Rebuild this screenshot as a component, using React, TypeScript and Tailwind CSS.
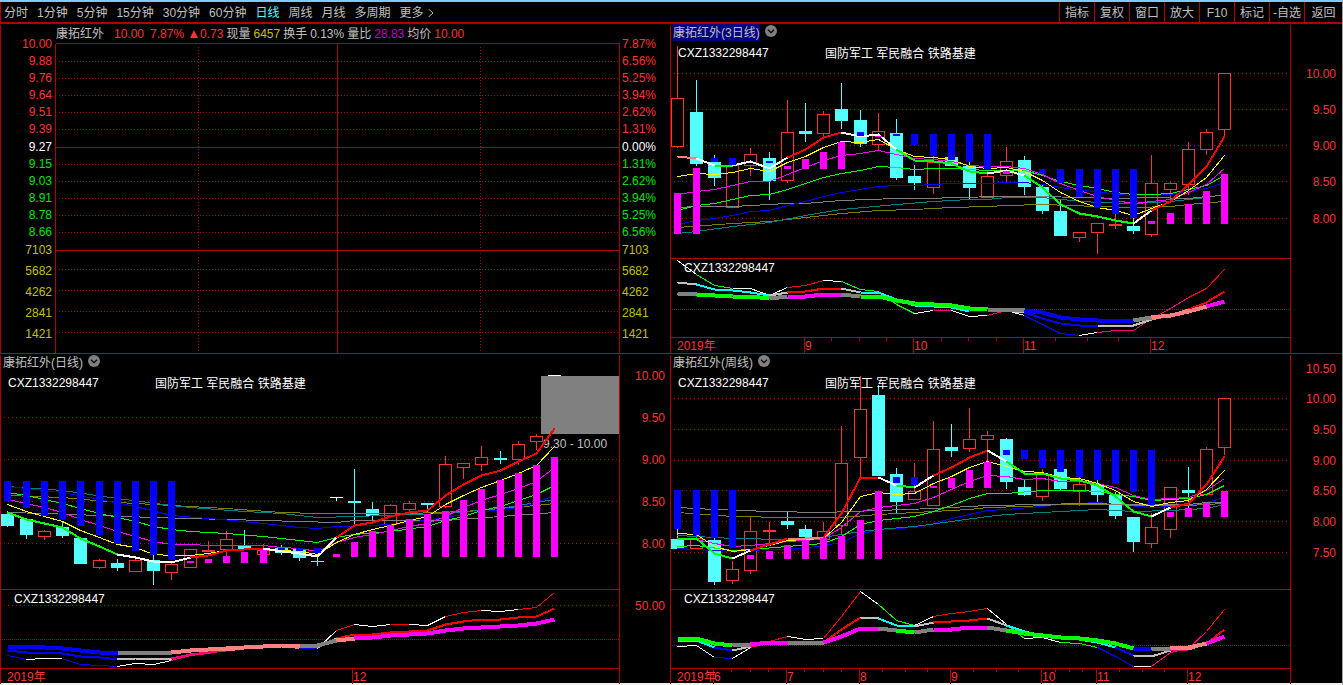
import React from "react";

const GRID = "#b00000";
const UP = "#ff3232";
const DOWN = "#54ffff";

const HUES: Record<string, string> = {
  w: "#ffffff",
  r: "#ff0000",
  g: "#00ff00",
  b: "#0000ff",
  m: "#ff00ff",
  p: "#ff8080",
  d: "#ff0080",
  s: "#c0c0c0",
  a: "#808080",
  c: "#00ffff",
  y: "#ffff00",
  t: "#008080",
  o: "#808000",
};

// Horizontal centre of each trading column, measured from the panel's left frame.
const COLS = [
  7, 26, 44, 62, 80, 99, 117, 135, 153, 171, 190, 208, 226, 244, 263, 281, 299, 317, 336, 354, 372, 390,
  409, 427, 445, 463, 481, 500, 518, 536, 554,
];

type Point = [number, number];

// "12 14 5:20" -> column/value pairs; a bare number belongs to the next column.
function parse(line: string): Point[] {
  let next = 0;
  return line.split(" ").map((part) => {
    const bits = part.split(":");
    const col = bits.length === 2 ? Number(bits[0]) : next;
    next = col + 1;
    return [col, Number(bits[bits.length - 1])];
  });
}

interface Series {
  ys: string;
  hues: string;
  width: number;
}

interface ChartData {
  left: number;
  top: number;
  width: number;
  plotRight: number;
  split: number;
  axis: number;
  candles: string;
  bars: string;
  averages: { hue: string; ys: string }[];
  trend: Series;
  lower: Series[];
  gridLines: number[];
  zero: number;
  scale: [number, string][];
  months: [number, string][];
  minorTicks: boolean;
}

const threeDay: ChartData = {
  left: 670,
  top: 24,
  width: 672,
  plotRight: 1290,
  split: 258,
  axis: 337,
  candles:
    "r46,98,146,148 c80,112,164,166 c155,162,178,186 r165,165,207,207 r148,154,165,176 c152,158,181,200 r100,132,180,183 c103,131,134,142 r111,114,133,136 c83,109,121,129 c110,120,144,147 r113,131,144,150 c119,133,178,180 c165,176,183,190 r156,162,187,194 c157,157,166,166 c162,166,188,199 r170,176,197,197 r147,161,175,183 c156,160,187,195 c184,187,211,214 c199,211,236,236 r232,232,237,242 r223,223,232,254 r214,224,226,229 c217,226,231,234 r155,183,234,237 r182,183,189,200 r142,149,184,195 r129,132,149,155 r73,73,129,137",
  bars:
    "0m193-234 1m168-234 2b158-162 3b158-165 4m165-166 5b161-163 6m166-169 7m159-169 8m152-169 9m142-169 10b132-136 11m136-137 12b134-136 13b134-145 14b134-156 15b134-160 16b134-162 17b134-169 18m171-174 20b169-174 21b169-183 22b169-197 23b169-208 24b169-214 25b169-218 26m221-224 27m213-224 28m204-224 29m191-224 30m174-224",
  averages: [
    { hue: "o", ys: "0:227 3:223 5:221 7:217 9:213 11:210 13:209 15:207 17:206 18:205 20:204 23:206 25:207 27:206 28:204 30:201" },
    { hue: "t", ys: "0:233 1:231 3:226 5:222 7:215 9:209 12:204 14:201 16:199 17:199 18:197 20:197 21:199 23:202 25:203 27:201 29:197 30:194" },
    { hue: "a", ys: "0:207 1:206 3:206 6:203 7:203 9:200 12:198 14:198 15:197 18:196 20:196 22:197 24:198 26:197 28:198 29:196 30:195" },
    { hue: "b", ys: "224 220 218 215 211 210 205 201 196 192 189 186 185 185 184 183 183 183 182 182 184 187 190 191 194 195 194 194 191 188 182" },
    { hue: "g", ys: "210 205 203 199 195 194 189 183 177 173 170 166 167 169 168 168 169 170 170 170 175 181 185 188 192 194 194 193 189 185 175" },
    { hue: "m", ys: "194 191 189 185 181 181 174 167 160 155 153 150 154 158 159 161 165 166 166 168 174 183 190 196 200 203 201 199 192 184 168" },
    { hue: "y", ys: "176 173 174 172 168 171 162 156 147 141 142 139 149 156 157 159 166 168 167 171 180 192 201 207 210 215 208 201 190 177 155" },
  ],
  trend: {
    ys: "156 158 165 165 161 168 157 149 137 132 136 134 149 160 161 163 171 173 170 175 187 204 213 216 220 223 210 201 184 166 136",
    hues: "1p 2w 3g 6w 9r 12w 17g 19w 25g 26w 30r",
    width: 2,
  },
  lower: [
    {
      ys: "260 274 285 288 288 295 287 285 280 281 289 291 304 313 310 310 316 315 310 315 324 333 335 332 330 330 318 308 297 288 269",
      hues: "1w 3g 6w 8r 9w 13g 14w 15d 17w 18d 19w 22b 23w 28d 30r",
      width: 1,
    },
    {
      ys: "282 284 289 290 292 295 292 291 288 288 292 292 299 305 306 307 311 310 310 312 318 323 325 325 325 325 319 315 309 302 291",
      hues: "1s 5c 6s 9r 10s 16c 17b 19s 23b 26s 28p 30r",
      width: 2,
    },
    {
      ys: "293 294 295 296 296 298 296 296 294 294 296 296 300 303 304 305 308 309 309 310 312 317 319 320 320 320 317 315 311 306 301",
      hues: "1a 5g 6a 9m 10a 17g 19a 25b 26a 29p 30m",
      width: 4,
    },
  ],
  gridLines: [73, 109, 145, 181, 218],
  zero: 309,
  scale: [[73, "10.00"], [109, "9.50"], [145, "9.00"], [181, "8.50"], [218, "8.00"]],
  months: [[804, "9"], [913, "10"], [1023, "11"], [1150, "12"]],
  minorTicks: true,
};

const daily: ChartData = {
  left: 0,
  top: 354,
  width: 670,
  plotRight: 619,
  split: 589,
  axis: 668,
  candles:
    "c511,514,526,527 c519,519,535,539 r530,531,536,540 c521,527,536,538 c538,538,564,564 r559,560,567,569 c559,563,568,571 r559,560,571,571 c555,560,571,585 r563,564,572,580 r549,549,567,568 r541,550,552,552 r531,539,549,556 c530,546,549,549 r544,550,554,555 c545,548,553,555 c549,549,558,561 c555,561,562,566 w497,497,498,501 c469,501,503,524 c502,509,516,520 r504,505,524,524 r501,503,509,512 c503,503,505,513 r456,464,506,508 r463,463,467,479 r446,457,464,471 c451,458,460,464 r441,444,459,465 r434,436,441,450 w375,375,376,376",
  bars:
    "0b481-501 1b481-508 2b481-516 3b481-520 4b481-526 5b481-535 6b481-544 7b481-551 8b481-555 9b481-560 10m561-563 11m559-563 12m556-563 13m552-563 14m550-563 15b548-550 16b548-551 17b548-553 18m554-557 19m542-557 20m531-557 21m525-557 22m519-557 23m514-557 24m511-557 25m500-557 26m489-557 27m480-557 28m473-557 29m465-557 30m457-557",
  averages: [
    { hue: "o", ys: "0:495 3:497 6:502 9:505 12:508 15:512 17:513 19:513 22:513 25:511 27:508 29:505 30:503" },
    { hue: "t", ys: "0:486 3:490 6:498 9:505 10:507 13:511 15:513 17:517 19:516 24:513 27:508 30:499" },
    { hue: "a", ys: "0:512 2:513 5:515 8:517 10:518 14:520 18:522 19:520 24:520 27:516 30:512" },
    { hue: "b", ys: "0:486 1:488 3:492 5:499 7:506 9:515 11:518 13:521 15:525 16:527 17:528 18:526 20:525 22:522 24:517 25:514 27:509 28:507 29:502 30:495" },
    { hue: "g", ys: "492 495 499 503 508 513 517 521 526 529 531 12:533 14:536 16:540 17:542 18:537 19:534 21:531 23:526 24:520 25:516 26:510 27:506 28:500 29:494 30:485" },
    { hue: "m", ys: "499 503 507 512 519 525 531 536 541 544 544 545 545 545 545 547 548 551 542 537 534 530 526 523 516 507 500 494 488 481 467" },
    { hue: "y", ys: "504 511 516 521 530 537 544 547 554 555 555 553 550 549 549 550 551 554 542 534 529 525 520 516 504 495 487 480 473 465 446" },
  ],
  trend: {
    ys: "512 519 523 527 538 546 554 557 561 562 557 555 550 549 548 551 553 556 537 525 522 516 512 510 495 484 475 470 461 453 428",
    hues: "6g 10w 14r 18w 30r",
    width: 2,
  },
  lower: [
    {
      ys: "655 659 658 658 664 665 666 663 664 660 655 653 650 648 647 646 648 648 630 624 626 624 624 625 616 612 610 611 609 607 592",
      hues: "1b 3w 6b 9w 14d 16p 17b 18w 19r 21w 22r 24w 26r 28w 30r",
      width: 1,
    },
    {
      ys: "650 652 652 653 656 657 659 658 658 658 654 652 650 648 647 646 646 647 638 634 634 632 631 630 624 621 619 619 617 616 608",
      hues: "6b 9s 12d 16p 17b 18s 30r",
      width: 2,
    },
    {
      ys: "646 646 647 648 650 652 652 652 652 652 650 649 648 647 646 645 645 645 640 638 637 635 634 633 630 628 627 626 625 623 619",
      hues: "6b 9a 16p 18a 19p 30m",
      width: 4,
    },
  ],
  gridLines: [417, 459, 501, 543, 605],
  zero: 639,
  scale: [[375, "10.00"], [417, "9.50"], [459, "9.00"], [501, "8.50"], [543, "8.00"], [605, "50.00"]],
  months: [[352, "12"]],
  minorTicks: false,
};

const weekly: ChartData = {
  left: 670,
  top: 354,
  width: 672,
  plotRight: 1290,
  split: 589,
  axis: 668,
  candles:
    "c529,539,549,549 r535,538,548,548 c538,540,582,585 r561,569,580,584 r517,531,570,574 r522,530,532,543 c511,521,525,529 c525,529,537,537 r522,531,539,539 r426,463,525,535 r376,409,457,478 c385,395,476,476 c468,474,502,513 r463,491,499,500 r421,449,505,506 c424,447,451,457 r408,439,448,452 r431,435,439,461 c438,439,482,489 c480,487,495,496 r469,474,496,501 c469,469,489,490 r477,484,491,506 c480,484,495,502 c492,495,516,519 c517,517,542,552 r513,527,543,548 r487,487,529,538 c467,490,493,508 r447,449,494,496 r398,398,447,455",
  bars:
    "0b490-529 1b490-535 2b490-538 3b490-548 4m555-559 5m551-559 6m545-559 7m541-559 8m538-559 9m536-559 10m520-559 11m491-559 12b477-483 13b477-485 14m486-488 15m478-488 16m470-488 17m462-488 18b450-455 19b450-459 20b450-468 21b450-472 22b450-477 23b450-480 24b450-484 25b450-492 26b450-505 27m512-517 28m508-517 29m503-517 30m491-517",
  averages: [
    { hue: "b", ys: "0:548 2:550 3:551 5:549 7:548 9:542 10:533 11:530 12:528 13:527 14:523 15:518 16:514 17:510 18:509 20:506 21:504 23:502 24:504 26:507 27:506 28:505 29:502 30:497" },
    { hue: "t", ys: "0:535 2:537 3:538 6:539 8:537 9:534 10:531 11:529 13:526 15:521 17:516 18:514 20:512 22:510 23:509 25:511 27:510 29:508 30:504" },
    { hue: "o", ys: "0:512 3:516 6:517 9:517 11:514 14:511 16:509 17:507 19:506 21:504 23:504 26:505 28:505 30:503" },
    { hue: "a", ys: "0:507 2:509 5:511 8:512 11:510 14:508 17:505 20:504 22:503 25:504 28:504 29:502 30:502" },
    { hue: "g", ys: "0:546 1:545 3:550 4:549 6:546 8:543 9:536 10:524 11:520 12:518 13:516 14:511 15:505 16:498 17:493 18:493 20:490 22:490 23:491 24:494 25:496 26:500 27:499 28:498 29:494 30:485" },
    { hue: "m", ys: "538 539 543 546 545 543 541 540 538 527 511 507 505 503 497 489 481 475 476 479 478 481 481 483 487 495 499 498 497 490 478" },
    { hue: "y", ys: "533 534 546 551 549 545 540 539 538 522 496 492 494 493 483 476 467 461 466 471 472 477 478 483 490 501 506 502 500 489 470" },
  ],
  trend: {
    ys: "538 538 553 558 550 544 538 538 537 513 477 477 485 487 475 467 457 450 461 473 473 478 480 485 496 511 516 507 503 484 456",
    hues: "3g 4w 6r 8p 11r 12w 13g 14w 17r 18w 26g 27w 30r",
    width: 2,
  },
  lower: [
    {
      ys: "646 645 657 658 647 641 636 639 638 616 591 604 620 625 616 613 611 608 624 638 637 642 643 647 656 666 666 652 648 631 609",
      hues: "2w 3b 4w 5d 6r 8w 10r 11w 13g 14w 17r 18w 19g 21w 23g 25b 26w 29d 30r",
      width: 1,
    },
    {
      ys: "640 640 647 650 646 643 641 642 642 629 617 618 625 626 622 621 620 618 625 631 635 638 639 642 647 655 656 650 649 643 629",
      hues: "2c 3b 4s 5d 6r 8s 10r 11s 13c 14s 17r 18s 24c 25b 27s 28d 29p 30r",
      width: 2,
    },
    {
      ys: "638 638 643 645 644 642 642 642 642 636 628 628 630 632 629 629 627 627 630 633 635 637 638 640 643 648 649 648 647 643 636",
      hues: "3g 4a 6m 8a 11m 12a 13g 14a 17m 18a 25g 26b 27a 29p 30m",
      width: 4,
    },
  ],
  gridLines: [398, 429, 460, 490, 521, 552],
  zero: 645,
  scale: [
    [368, "10.50"],
    [398, "10.00"],
    [429, "9.50"],
    [460, "9.00"],
    [490, "8.50"],
    [521, "8.00"],
    [552, "7.50"],
  ],
  months: [[713, "6"], [786, "7"], [859, "8"], [950, "9"], [1041, "10"], [1096, "11"], [1187, "12"]],
  minorTicks: true,
};

interface RuleProps {
  x1: number;
  y1: number;
  x2: number;
  y2: number;
  dash?: string;
}

function Rule({ x1, y1, x2, y2, dash }: RuleProps) {
  return (
    <line x1={x1 + 0.5} y1={y1 + 0.5} x2={x2 + 0.5} y2={y2 + 0.5} stroke={GRID} strokeWidth={1} strokeDasharray={dash} />
  );
}

function ColouredLine({ series, left }: { series: Series; left: number }) {
  const pts = parse(series.ys);
  let start = 0;
  return (
    <g fill="none" strokeWidth={series.width} strokeLinejoin="round">
      {series.hues.split(" ").map((token) => {
        const end = Number(token.slice(0, -1));
        const piece = pts.slice(start, end + 1);
        start = end;
        return (
          <polyline
            key={end}
            stroke={HUES[token.slice(-1)]}
            points={piece.map(([c, y]) => `${left + COLS[c] + 0.5},${y + 0.5}`).join(" ")}
          />
        );
      })}
    </g>
  );
}

function Candles({ data }: { data: ChartData }) {
  return (
    <g>
      {data.candles.split(" ").map((token, i) => {
        const [high, top, bottom, low] = token.slice(1).split(",").map(Number);
        const x = data.left + COLS[i];
        const colour = token[0] === "r" ? UP : token[0] === "c" ? DOWN : "#ffffff";
        const hollow = token[0] === "r" && bottom - top > 2;
        return (
          <g key={i}>
            <rect x={x} y={high} width={1} height={low - high} fill={colour} />
            {hollow ? (
              <rect x={x - 5.5} y={top + 0.5} width={12} height={bottom - top - 0.5} fill="#000" stroke={colour} />
            ) : (
              <rect x={x - 6} y={top} width={13} height={bottom - top} fill={colour} />
            )}
          </g>
        );
      })}
    </g>
  );
}

function Bars({ data }: { data: ChartData }) {
  return (
    <g>
      {data.bars.split(" ").map((token) => {
        const m = /^(\d+)([bm])(\d+)-(\d+)$/.exec(token);
        if (!m) return null;
        return (
          <rect
            key={m[1]}
            x={data.left + COLS[Number(m[1])] - 3}
            y={Number(m[3])}
            width={7}
            height={Number(m[4]) - Number(m[3])}
            fill={HUES[m[2]]}
          />
        );
      })}
    </g>
  );
}

function TimeAxis({ data }: { data: ChartData }) {
  const { months, axis, left } = data;
  const bottom = axis + 15;
  return (
    <g>
      {months.map(([x, label], i) => (
        <g key={label}>
          <Rule x1={x} y1={axis} x2={x} y2={bottom} />
          {data.minorTicks &&
            i < months.length - 1 &&
            [1, 2, 3].map((q) => {
              const mx = Math.round(x + ((months[i + 1][0] - x) * q) / 4);
              return <Rule key={q} x1={mx} y1={axis} x2={mx} y2={axis + 3} />;
            })}
          <text x={x + 1} y={axis + 13} fill={UP}>
            {label}
          </text>
        </g>
      ))}
      <text x={left + 7} y={axis + 13} fill={UP}>
        2019年
      </text>
    </g>
  );
}

function Chart({ data, children }: { data: ChartData; children?: React.ReactNode }) {
  const { left, top, plotRight, split, axis } = data;
  const bodyTop = top + 17;
  return (
    <svg
      viewBox={`${left} ${bodyTop} ${data.width} 312`}
      className="block h-auto w-full overflow-visible text-[12px]"
      shapeRendering="crispEdges"
    >
      {data.gridLines.map((y) => (
        <Rule key={y} x1={left + 3} y1={y} x2={plotRight - 1} y2={y} dash="1 3" />
      ))}
      <Rule x1={left + 1} y1={data.zero} x2={plotRight - 1} y2={data.zero} dash="1 1" />
      <Rule x1={left} y1={top} x2={left} y2={axis + 15} />
      <Rule x1={plotRight} y1={top} x2={plotRight} y2={axis + 15} />
      <Rule x1={left} y1={split} x2={plotRight} y2={split} />
      <Rule x1={left} y1={axis} x2={plotRight} y2={axis} />
      {children}
      <Candles data={data} />
      {data.averages.map((a) => (
        <polyline
          key={a.hue}
          fill="none"
          stroke={HUES[a.hue]}
          points={parse(a.ys)
            .map(([c, y]) => `${left + COLS[c] + 0.5},${y + 0.5}`)
            .join(" ")}
        />
      ))}
      <ColouredLine series={data.trend} left={left} />
      <Bars data={data} />
      {data.lower.map((s) => (
        <ColouredLine key={s.width} series={s} left={left} />
      ))}
      <g fill="#fff">
        <text x={left + 8} y={top + 33}>
          CXZ1332298447
        </text>
        <text x={left + 155} y={top + 34}>
          国防军工 军民融合 铁路基建
        </text>
        <text x={left + 14} y={split + 14}>
          CXZ1332298447
        </text>
      </g>
      <g fill={UP} textAnchor="end">
        {data.scale.map(([y, label]) => (
          <text key={label} x={plotRight + 46} y={y + 5}>
            {label}
          </text>
        ))}
      </g>
      <TimeAxis data={data} />
    </svg>
  );
}

function PanelTitle({ title, active }: { title: string; active?: boolean }) {
  return (
    <header className="flex h-[17px] items-start gap-[5px] pl-[3px]">
      <h2 className={active ? "bg-[#000080] pt-px leading-4" : "pt-px leading-4"}>{title}</h2>
      <button type="button" aria-label={title} className="pt-px">
        <svg viewBox="0 0 12 12" className="block h-3 w-3">
          <circle cx="6" cy="6" r="6" fill="#808080" />
          <path d="M3 4.8 6 7.6l3-2.8" fill="none" stroke="#000" strokeWidth="1.2" />
        </svg>
      </button>
    </header>
  );
}

const priceRows: [number, string, string, string][] = [
  [43, "10.00", "7.87%", UP],
  [60, "9.88", "6.56%", UP],
  [77, "9.76", "5.25%", UP],
  [94, "9.64", "3.94%", UP],
  [111, "9.51", "2.62%", UP],
  [128, "9.39", "1.31%", UP],
  [146, "9.27", "0.00%", "#ffffff"],
  [163, "9.15", "1.31%", "#00e600"],
  [180, "9.03", "2.62%", "#00e600"],
  [197, "8.91", "3.94%", "#00e600"],
  [214, "8.78", "5.25%", "#00e600"],
  [231, "8.66", "6.56%", "#00e600"],
  [249, "7103", "7103", "#c0c000"],
  [270, "5682", "5682", "#c0c000"],
  [291, "4262", "4262", "#c0c000"],
  [312, "2841", "2841", "#c0c000"],
  [333, "1421", "1421", "#c0c000"],
];

function Intraday() {
  return (
    <section>
      <header className="flex h-[17px] items-center gap-[3px] pt-[2px] pl-14 whitespace-nowrap">
        <h2 className="mr-[7px]">康拓红外</h2>
        <span className="mr-[3px] text-[#ff3232]">10.00</span>
        <span className="mr-[3px] text-[#ff3232]">7.87%</span>
        <span className="flex items-center gap-[2px] text-[#ff3232]">
          <svg viewBox="0 0 8 8" className="h-2 w-2">
            <path d="M4 0 8 8H0Z" fill="currentColor" />
          </svg>
          0.73
        </span>
        <span>现量</span>
        <span className="text-[#c0c000]">6457</span>
        <span>换手</span>
        <span>0.13%</span>
        <span>量比</span>
        <span className="text-[#c000c0]">28.83</span>
        <span>均价</span>
        <span className="text-[#ff3232]">10.00</span>
      </header>
      <svg
        viewBox="0 41 670 312"
        className="block h-auto w-full overflow-visible text-[12px]"
        shapeRendering="crispEdges"
      >
        {[61, 78, 95, 112, 129, 164, 181, 198, 215, 232, 269, 290, 311, 332].map((y) => (
          <Rule key={y} x1={58} y1={y} x2={618} y2={y} dash="1 2" />
        ))}
        {[198, 480].map((x) => (
          <Rule key={x} x1={x} y1={46} x2={x} y2={353} dash="1 2" />
        ))}
        {[43, 147, 250].map((y) => (
          <Rule key={y} x1={55} y1={y} x2={619} y2={y} />
        ))}
        {[55, 337, 619].map((x) => (
          <Rule key={x} x1={x} y1={43} x2={x} y2={353} />
        ))}
        <Rule x1={0} y1={24} x2={0} y2={353} />
        {priceRows.map(([y, left, right, colour]) => (
          <g key={y} fill={colour}>
            <text x={52} y={y + 5} textAnchor="end">
              {left}
            </text>
            <text x={622} y={y + 5}>
              {right}
            </text>
          </g>
        ))}
      </svg>
    </section>
  );
}

const periods = ["分时", "1分钟", "5分钟", "15分钟", "30分钟", "60分钟", "日线", "周线", "月线", "多周期"];
const tools = ["指标", "复权", "窗口", "放大", "F10", "标记", "-自选", "返回"];

function Toolbar() {
  return (
    <div className="flex h-[22px] items-stretch justify-between border-b-2 border-l border-[#b00000]">
      <nav className="flex items-center gap-[9px] pt-[2px] pl-[3px] whitespace-nowrap">
        {periods.map((p) => (
          <button key={p} type="button" className={p === "日线" ? "text-[#54ffff]" : ""}>
            {p}
          </button>
        ))}
        <button type="button" className="flex items-center gap-1">
          更多
          <svg viewBox="0 0 6 8" className="h-2 w-[6px]">
            <path d="M.5 0 5 4 .5 8" fill="none" stroke="currentColor" />
          </svg>
        </button>
      </nav>
      <div className="flex whitespace-nowrap">
        {tools.map((t) => (
          <button key={t} type="button" className="w-[35px] border-l border-[#b00000] pt-[2px] text-center last:w-[38px]">
            {t}
          </button>
        ))}
      </div>
    </div>
  );
}

export default function App() {
  return (
    <main className="w-full border-r border-[#a0a0a0] bg-black font-['Liberation_Sans','Noto_Sans_CJK_SC',sans-serif] text-[12px] leading-4 text-[#c0c0c0]">
      <div className="h-[2px] bg-[#80c8ff]" />
      <Toolbar />
      <div className="grid grid-cols-[670fr_672fr]">
        <Intraday />
        <section>
          <PanelTitle title="康拓红外(3日线)" active />
          <Chart data={threeDay} />
        </section>
        <section className="border-t border-[#b00000]">
          <PanelTitle title="康拓红外(日线)" />
          <Chart data={daily}>
            <rect x={541} y={376} width={78} height={58} fill="#808080" />
            <text x={543} y={448} fill="#c0c0c0">
              9.30 - 10.00
            </text>
          </Chart>
        </section>
        <section className="border-t border-[#b00000]">
          <PanelTitle title="康拓红外(周线)" />
          <Chart data={weekly} />
        </section>
      </div>
      <div className="h-[2px] bg-[#f0f0f0]" />
    </main>
  );
}
